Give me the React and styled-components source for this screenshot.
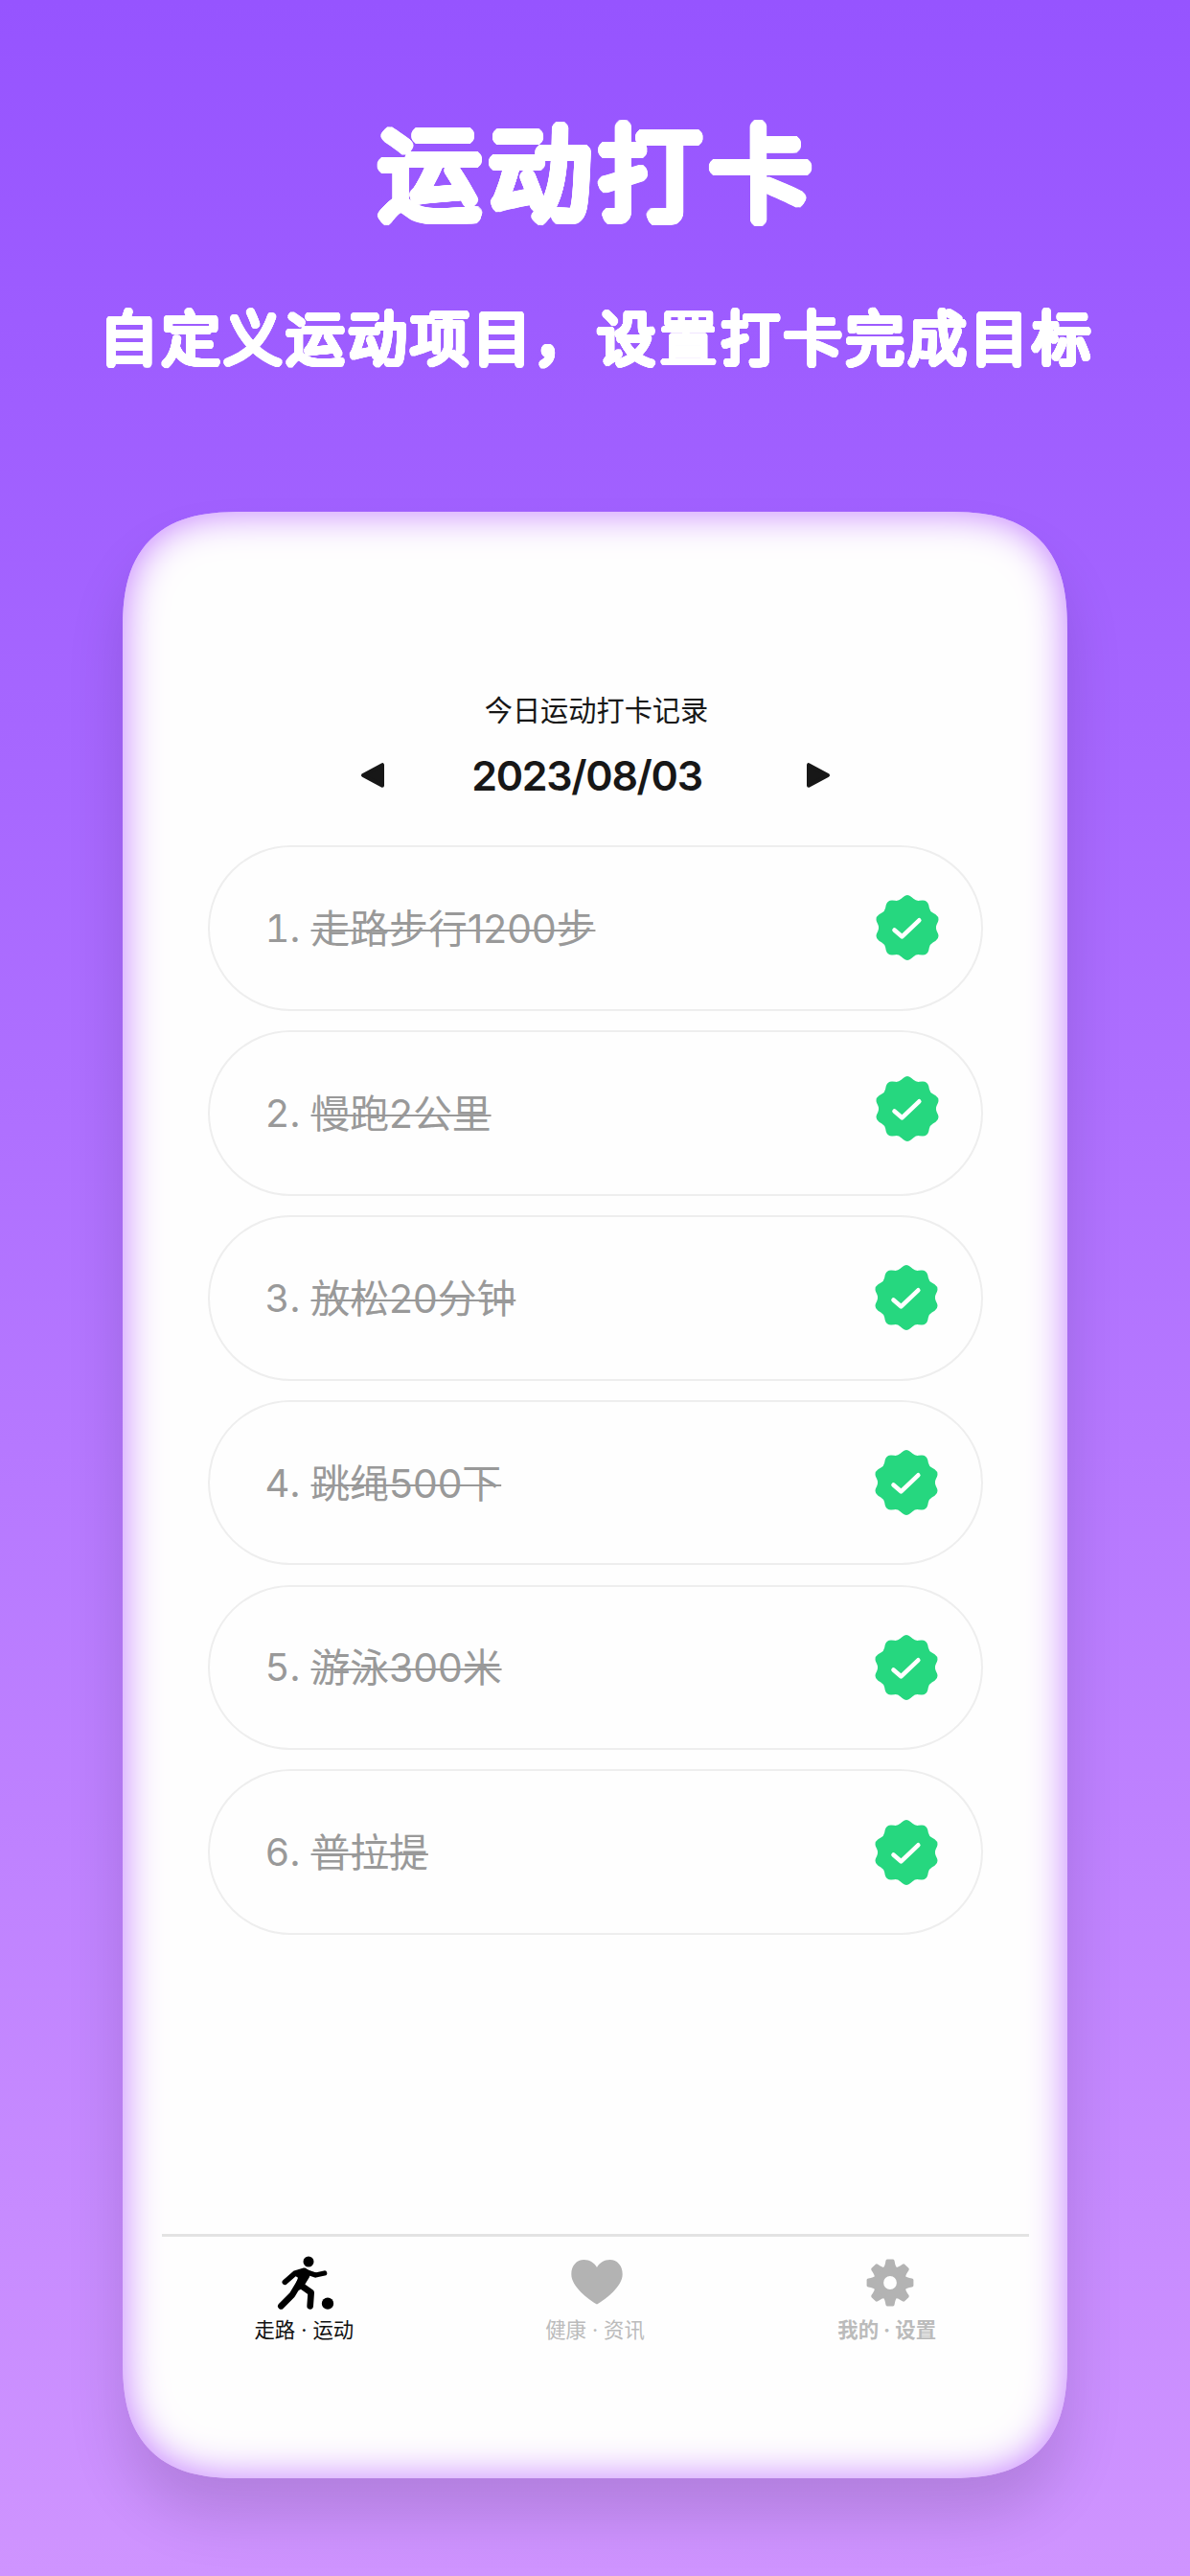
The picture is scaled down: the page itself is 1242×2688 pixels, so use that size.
import styled, { createGlobalStyle } from "styled-components";

const GlobalStyle = createGlobalStyle`
  * {
    box-sizing: border-box;
  }

  body {
    margin: 0;
    font-family: Inter, "Noto Sans CJK SC", sans-serif;
  }
`;

const Page = styled.main`
  display: flex;
  flex-direction: column;
  align-items: center;
  width: 1242px;
  height: 2688px;
  overflow: hidden;
  background: linear-gradient(180deg, #9654ff 0%, #cf94ff 100%);
`;

// thickens a light CJK face and rounds off its strokes
const ring = (r) =>
  Array.from({ length: 32 }, (_, i) => {
    const a = (i * Math.PI) / 16;
    return `${(Math.cos(a) * r).toFixed(2)}px ${(Math.sin(a) * r).toFixed(2)}px 0 #fff`;
  }).join(", ");

const Title = styled.h1`
  margin: 104px 0 0;
  height: 142px;
  padding-left: 8px;
  font-family: "Noto Sans CJK SC", sans-serif;
  font-size: 107px;
  font-weight: 300;
  letter-spacing: 8px;
  line-height: 142px;
  color: #fff;
  text-shadow: ${ring(3)}, ${ring(6)};
  white-space: nowrap;
`;

const SubTitle = styled.h2`
  margin: 64px 0 0;
  height: 80px;
  padding-left: 4px;
  font-family: "Noto Sans CJK SC", sans-serif;
  font-size: 61px;
  font-weight: 300;
  letter-spacing: 3.9px;
  line-height: 80px;
  color: #fff;
  text-shadow: ${ring(1.5)}, ${ring(3.1)};
  white-space: nowrap;
`;

// keeps the counters of a dense character open
const Dense = styled.span`
  text-shadow: ${ring(1.8)};
`;

const Phone = styled.section`
  display: flex;
  flex-direction: column;
  align-items: center;
  width: 986px;
  height: 2052px;
  margin-top: 144px;
  padding-top: 186px;
  border-radius: 104px;
  background: #fefefe;
  box-shadow: inset 0 0 40px #c27aff, 0 40px 60px rgba(0, 0, 0, 0.13);

  @supports (corner-shape: superellipse(1.4)) {
    border-radius: 126px;
    corner-shape: superellipse(1.4);
  }
`;

const Caption = styled.p`
  margin: 0;
  height: 44px;
  padding-left: 3px;
  font-size: 29.2px;
  line-height: 44px;
  color: #171717;
`;

const DateBar = styled.div`
  display: flex;
  align-items: center;
  justify-content: space-between;
  width: 491px;
  height: 50px;
  margin: 20px 0 0 1px;
`;

const DateText = styled.span`
  margin-right: 18px;
  font-size: 43px;
  font-weight: 600;
  letter-spacing: -1.3px;
  line-height: 50px;
  color: #171717;
`;

const Arrow = styled.svg`
  width: 26px;
  height: 28px;
  fill: #171717;
  stroke: #171717;
  stroke-width: 4;
  stroke-linejoin: round;
  transform: ${(props) => (props.$flip ? "scaleX(-1)" : "none")};
`;

const List = styled.ul`
  display: flex;
  flex-direction: column;
  gap: 20.1px;
  width: 809px;
  margin: 48px 0 0;
  padding: 0;
  list-style: none;
`;

const Item = styled.li`
  display: flex;
  align-items: center;
  height: 172.8px;
  padding: 0 43px 0 58px;
  border: 2px solid #eeeeee;
  border-radius: 87px;
  font-size: 40.8px;
  color: #999;
`;

const Num = styled.span`
  width: 35px;
  font-size: 40px;
  font-variant-numeric: tabular-nums;
  text-align: right;
  white-space: nowrap;
`;

const Name = styled.span`
  flex: 1;
  margin-left: 13px;
  padding-bottom: 4px;
  text-decoration: line-through;
  text-decoration-thickness: 2px;
  white-space: nowrap;
`;

const Badge = styled.svg`
  width: 68px;
  height: 68px;
  margin: ${(props) => props.$margin || "0"};
`;

const TabBar = styled.nav`
  display: flex;
  width: 905px;
  margin-top: auto;
  height: 255px;
  border-top: 3px solid #e3e3e3;
`;

const Tab = styled.div`
  display: flex;
  flex-direction: column;
  align-items: center;
  flex: 1;
  padding-top: 18px;
  font-size: 21.4px;
  font-weight: ${(props) => props.$weight || 400};
  color: ${(props) => props.$color};
  transform: translateX(${(props) => props.$shift || 0}px);
`;

const TabIcon = styled.svg`
  width: 60px;
  height: 60px;
  margin-left: ${(props) => props.$nudge || 0}px;
`;

const TabText = styled.span`
  height: 32px;
  margin-top: 3px;
  line-height: 32px;
  white-space: nowrap;
`;

// ten-pointed seal with soft tips
const sealPath = () => {
  const at = (r, deg) => {
    const a = ((deg - 90) * Math.PI) / 180;
    return `${(r * Math.cos(a)).toFixed(2)} ${(r * Math.sin(a)).toFixed(2)}`;
  };
  let d = `M${at(32.6, -7)}`;
  for (let i = 0; i < 10; i++) {
    const t = i * 36;
    d += `Q${at(35.4, t)} ${at(32.6, t + 7)}`;
    d += `L${at(30.8, t + 12)}`;
    d += `Q${at(29.2, t + 18)} ${at(30.8, t + 24)}`;
    d += `L${at(32.6, t + 29)}`;
  }
  return d + "Z";
};

const seal = sealPath();

// eight teeth, each a narrow trapezoid on the gear body
const teeth = [0, 45, 90, 135, 180, 225, 270, 315];

const sports = [
  { name: "走路步行1200步" },
  { name: "慢跑2公里", badge: "-9px 0 0 0" },
  { name: "放松20分钟", badge: "0 1px 0 0" },
  { name: "跳绳500下", badge: "0 1px 0 0" },
  { name: "游泳300米", badge: "0 1px 0 0" },
  { name: "普拉提", badge: "0 1px 0 0" },
];

function RunIcon() {
  return (
    <TabIcon $nudge={3} viewBox="86 94 180 180">
      <circle cx="185" cy="118" r="16.5" />
      <circle cx="245" cy="249" r="18.5" />
      <path d="M136 158L166 140Q173 137 180 141L191 148L188 166L166 202L134 218L152 168Z" />
      <g
        fill="none"
        stroke="#000"
        strokeLinecap="round"
        strokeLinejoin="round"
      >
        <path d="M111 182L142 155L172 146" strokeWidth="17" />
        <path d="M178 150L207 160L235 154" strokeWidth="16" />
        <path d="M99 257L134 222L156 185" strokeWidth="20" />
        <path d="M158 190L193 215L190 257" strokeWidth="20" />
      </g>
    </TabIcon>
  );
}

function HeartIcon() {
  return (
    <TabIcon $nudge={3} viewBox="-30 -30 60 60" fill="#b3b3b3">
      <path d="M0 22.5C-9 17.5-26.7 4-26.7-9C-26.7-18-21-24-13.5-24C-7.5-24-2.5-20.5 0-16C2.5-20.5 7.5-24 13.5-24C21-24 26.7-18 26.7-9C26.7 4 9 17.5 0 22.5Z" />
    </TabIcon>
  );
}

function GearIcon() {
  return (
    <TabIcon $nudge={6} viewBox="-30 -30 60 60" fill="#b3b3b3">
      <circle r="12.2" fill="none" stroke="#b3b3b3" strokeWidth="10.6" />
      {teeth.map((deg) => (
        <path
          key={deg}
          transform={`rotate(${deg})`}
          d="M-7.5-15Q-5.4-17-4.6-22.8Q-4.3-24.4-3-24.4L3-24.4Q4.3-24.4 4.6-22.8Q5.4-17 7.5-15Z"
        />
      ))}
    </TabIcon>
  );
}

function App() {
  return (
    <Page>
      <GlobalStyle />
      <Title>运动打卡</Title>
      <SubTitle>
        自定义运动项目，设<Dense>置</Dense>打卡完成目标
      </SubTitle>

      <Phone>
        <Caption>今日运动打卡记录</Caption>
        <DateBar>
          <Arrow viewBox="0 0 26 28">
            <path d="M23 3.2V24.8L3 14Z" />
          </Arrow>
          <DateText>2023/08/03</DateText>
          <Arrow $flip viewBox="0 0 26 28">
            <path d="M23 3.2V24.8L3 14Z" />
          </Arrow>
        </DateBar>

        <List>
          {sports.map((sport, index) => (
            <Item key={sport.name}>
              <Num>{index + 1}.</Num>
              <Name>{sport.name}</Name>
              <Badge $margin={sport.badge} viewBox="-34 -34 68 68">
                <path d={seal} fill="#26d77f" />
                <path
                  d="M-13.5 2.4L-5.6 9.3L12.3-7.7"
                  fill="none"
                  stroke="#fff"
                  strokeWidth="4.6"
                  strokeLinecap="round"
                  strokeLinejoin="round"
                />
              </Badge>
            </Item>
          ))}
        </List>

        <TabBar>
          <Tab $color="#111" $shift={-2}>
            <RunIcon />
            <TabText>走路 · 运动</TabText>
          </Tab>
          <Tab $color="#bbb">
            <HeartIcon />
            <TabText>健康 · 资讯</TabText>
          </Tab>
          <Tab $color="#bbb" $weight={700} $shift={3}>
            <GearIcon />
            <TabText>我的 · 设置</TabText>
          </Tab>
        </TabBar>
      </Phone>
    </Page>
  );
}

export default App;
